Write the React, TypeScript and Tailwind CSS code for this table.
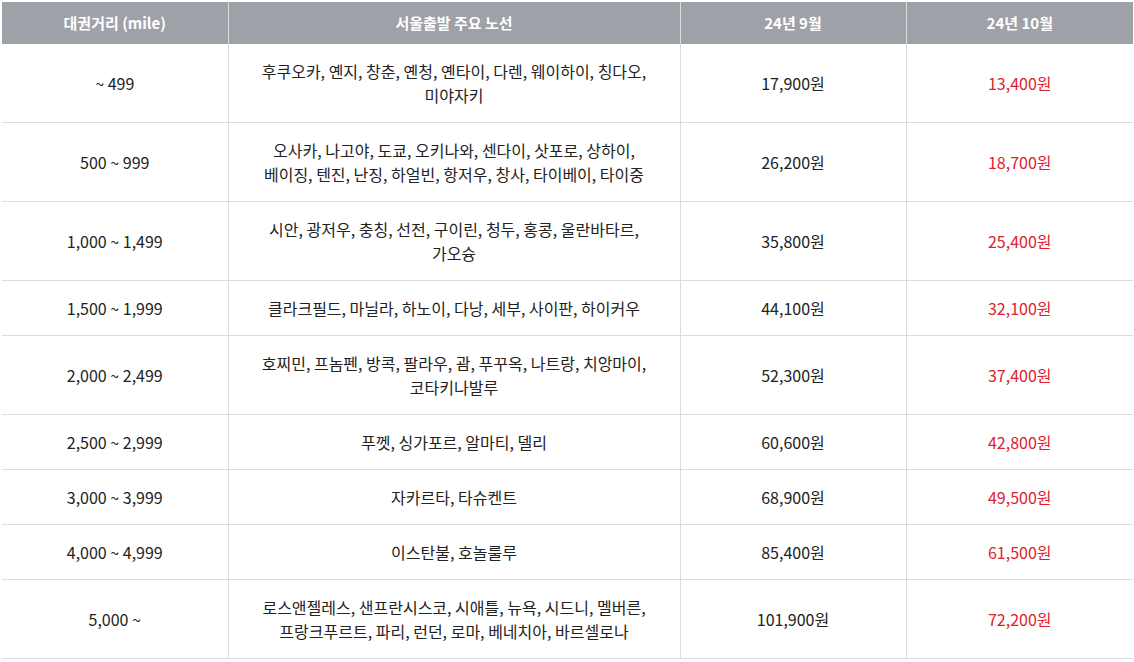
import React from "react";

const rows: [string, string[], string, string][] = [
  ["~ 499", ["후쿠오카, 옌지, 창춘, 옌청, 옌타이, 다렌, 웨이하이, 칭다오,", "미야자키"], "17,900원", "13,400원"],
  ["500 ~ 999", ["오사카, 나고야, 도쿄, 오키나와, 센다이, 삿포로, 상하이,", "베이징, 텐진, 난징, 하얼빈, 항저우, 창사, 타이베이, 타이중"], "26,200원", "18,700원"],
  ["1,000 ~ 1,499", ["시안, 광저우, 충칭, 선전, 구이린, 청두, 홍콩, 울란바타르,", "가오슝"], "35,800원", "25,400원"],
  ["1,500 ~ 1,999", ["클라크필드, 마닐라, 하노이, 다낭, 세부, 사이판, 하이커우"], "44,100원", "32,100원"],
  ["2,000 ~ 2,499", ["호찌민, 프놈펜, 방콕, 팔라우, 괌, 푸꾸옥, 나트랑, 치앙마이,", "코타키나발루"], "52,300원", "37,400원"],
  ["2,500 ~ 2,999", ["푸껫, 싱가포르, 알마티, 델리"], "60,600원", "42,800원"],
  ["3,000 ~ 3,999", ["자카르타, 타슈켄트"], "68,900원", "49,500원"],
  ["4,000 ~ 4,999", ["이스탄불, 호놀룰루"], "85,400원", "61,500원"],
  ["5,000 ~", ["로스앤젤레스, 샌프란시스코, 시애틀, 뉴욕, 시드니, 멜버른,", "프랑크푸르트, 파리, 런던, 로마, 베네치아, 바르셀로나"], "101,900원", "72,200원"],
];

export default function App() {
  return (
    <div
      className="w-[1134px] h-[662px] bg-white pt-[2px] pl-[2px] pr-[1px]"
      style={{ fontFamily: '"Noto Sans CJK KR", "Noto Sans", sans-serif' }}
    >
      <table className="w-full border-collapse table-fixed text-[16px] leading-[24px] text-[#222]">
        <colgroup>
          <col className="w-[226px]" />
          <col className="w-[452px]" />
          <col className="w-[226px]" />
          <col />
        </colgroup>
        <thead>
          <tr className="bg-[#9fa1a8] text-white font-bold text-[15px] h-[42px]">
            <th className="border-r border-[#dcdcdc] px-2 font-bold">대권거리 (mile)</th>
            <th className="border-r border-[#dcdcdc] px-2 font-bold">서울출발 주요 노선</th>
            <th className="border-r border-[#dcdcdc] px-2 font-bold">24년 9월</th>
            <th className="px-2 font-bold">24년 10월</th>
          </tr>
        </thead>
        <tbody>
          {rows.map((r, i) => (
            <tr key={i} className="border-b border-[#dcdcdc]">
              <td className="border-r border-[#dcdcdc] text-center py-[15px] px-2">{r[0]}</td>
              <td className="border-r border-[#dcdcdc] text-center py-[15px] px-2">
                {r[1].map((l, j) => (
                  <div key={j}>{l}</div>
                ))}
              </td>
              <td className="border-r border-[#dcdcdc] text-center py-[15px] px-2">{r[2]}</td>
              <td className="text-center py-[15px] px-2 text-[#e0202d]">{r[3]}</td>
            </tr>
          ))}
        </tbody>
      </table>
    </div>
  );
}
